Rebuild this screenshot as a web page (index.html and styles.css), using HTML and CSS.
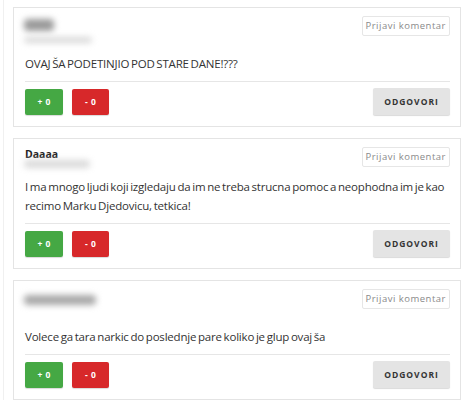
FILE: index.html
```html
<!DOCTYPE html>
<html>
<head>
<meta charset="utf-8">
<link rel="stylesheet" href="styles.css">
</head>
<body>
<div class="page">
  <div class="card">
    <div class="head head-tall">
      <div class="author">
        <div class="blur blur-name1"></div>
        <div class="blur blur-date1"></div>
      </div>
      <button class="report">Prijavi komentar</button>
    </div>
    <p class="text">OVAJ ŠA PODETINJIO POD STARE DANE!???</p>
    <div class="divider"></div>
    <div class="actions">
      <div class="votes">
        <button class="vote up">+ 0</button>
        <button class="vote down">- 0</button>
      </div>
      <button class="reply">ODGOVORI</button>
    </div>
  </div>

  <div class="card">
    <div class="head head-short">
      <div class="author">
        <div class="name">Daaaa</div>
        <div class="blur blur-date2"></div>
      </div>
      <button class="report">Prijavi komentar</button>
    </div>
    <p class="text">I ma mnogo ljudi koji izgledaju da im ne treba strucna pomoc a neophodna im je kao recimo Marku Djedovicu, tetkica!</p>
    <div class="divider"></div>
    <div class="actions">
      <div class="votes">
        <button class="vote up">+ 0</button>
        <button class="vote down">- 0</button>
      </div>
      <button class="reply">ODGOVORI</button>
    </div>
  </div>

  <div class="card">
    <div class="head head-tall">
      <div class="author">
        <div class="blur blur-name3"></div>
      </div>
      <button class="report">Prijavi komentar</button>
    </div>
    <p class="text">Volece ga tara narkic do poslednje pare koliko je glup ovaj ša</p>
    <div class="divider"></div>
    <div class="actions">
      <div class="votes">
        <button class="vote up">+ 0</button>
        <button class="vote down">- 0</button>
      </div>
      <button class="reply">ODGOVORI</button>
    </div>
  </div>
</div>
</body>
</html>
```

FILE: styles.css
```css
* { box-sizing: border-box; }
html, body { margin: 0; padding: 0; background: #fff; }
body {
  font-family: "Open Sans", "Noto Sans", sans-serif;
  color: #333;
  width: 468px;
  height: 401px;
  overflow: hidden;
}
.page {
  padding: 7px 7px 0 9px;
  margin-left: 3px;
  border-left: 1px solid #f0f0f0;
  display: flex;
  flex-direction: column;
  gap: 11px;
}
.card {
  width: 448px;
  border: 1px solid #e4e4e4;
  padding: 7px 10px 11px 10px;
  background: #fff;
}
.head {
  display: flex;
  justify-content: space-between;
  align-items: flex-start;
}
.head-tall { height: 39px; }
.head-short { height: 31px; }
.author { padding-top: 2px; }
.blur { filter: blur(3px); border-radius: 4px; }
.blur-name1 { width: 30px; height: 12px; background: #9a9a9a; margin-top: 2px; }
.blur-date1 { width: 68px; height: 6px; background: #d8d8d8; margin-top: 6px; }
.blur-date2 { width: 66px; height: 8px; background: #dadada; margin-top: 0; }
.blur-name3 { width: 72px; height: 10px; background: #a8a8a8; margin-top: 5px; }
.name {
  font-weight: 700;
  font-size: 10.5px;
  line-height: 12px;
  color: #222;
  padding-left: 1px;
}
.report {
  font-family: "Open Sans", sans-serif;
  font-size: 9.5px;
  letter-spacing: 0.5px;
  color: #8a8a8a;
  background: #fff;
  border: 1px solid #e6e6e6;
  border-radius: 2px;
  height: 20px;
  padding: 0 3px;
  margin-top: 1px;
  line-height: 18px;
}
.text {
  margin: 0 0 0 1px;
  font-size: 11.5px;
  letter-spacing: -0.2px;
  word-spacing: -1px;
  line-height: 19px;
  color: #333;
}
.divider {
  height: 1px;
  background: #e6e6e6;
  margin: 8px 0 6px 1px;
}
.actions {
  display: flex;
  justify-content: space-between;
  align-items: center;
  padding-left: 1px;
}
.votes { display: flex; gap: 9px; }
.vote {
  width: 38px;
  height: 26px;
  border: none;
  border-radius: 2px;
  color: #fff;
  font-family: "Open Sans", sans-serif;
  font-weight: 700;
  font-size: 8.5px;
  word-spacing: 1px;
  box-shadow: 0 1px 1px rgba(0,0,0,0.15);
  padding: 0;
}
.up { background: #45a844; }
.down { background: #d7282a; width: 37px; }
.reply {
  width: 77px;
  height: 27px;
  border: none;
  border-radius: 2px;
  background: #e4e4e4;
  color: #333;
  font-family: "Open Sans", sans-serif;
  font-weight: 700;
  font-size: 8.5px;
  letter-spacing: 1px;
  box-shadow: 0 1px 1px rgba(0,0,0,0.15);
  padding: 0;
}
```
